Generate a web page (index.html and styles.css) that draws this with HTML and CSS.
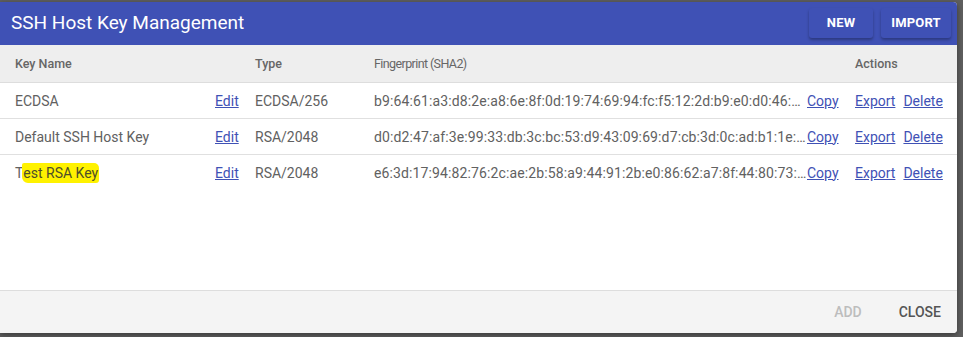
FILE: index.html
```html
<!DOCTYPE html>
<html>
<head>
<meta charset="utf-8">
<link rel="stylesheet" href="styles.css">
</head>
<body>
<div class="dialog">
  <div class="dlg-header">
    <div class="dlg-title">SSH Host Key Management</div>
    <div class="hdr-actions">
      <button class="hdr-btn btn-new">NEW</button>
      <button class="hdr-btn btn-import">IMPORT</button>
    </div>
  </div>
  <div class="dlg-body">
    <div class="row head">
      <div class="c-name">Key Name</div>
      <div class="c-edit"></div>
      <div class="c-type">Type</div>
      <div class="c-fp">Fingerprint (SHA2)</div>
      <div class="c-copy"></div>
      <div class="c-act">Actions</div>
    </div>
    <div class="row">
      <div class="c-name">ECDSA</div>
      <div class="c-edit"><a class="lnk">Edit</a></div>
      <div class="c-type">ECDSA/256</div>
      <div class="c-fp">b9:64:61:a3:d8:2e:a8:6e:8f:0d:19:74:69:94:fc:f5:12:2d:b9:e0:d0:46:7a:1c:55:90:3b:aa:41:0e:2f:88</div>
      <div class="c-copy"><a class="lnk">Copy</a></div>
      <div class="c-act"><a class="lnk">Export</a><a class="lnk">Delete</a></div>
    </div>
    <div class="row">
      <div class="c-name">Default SSH Host Key</div>
      <div class="c-edit"><a class="lnk">Edit</a></div>
      <div class="c-type">RSA/2048</div>
      <div class="c-fp">d0:d2:47:af:3e:99:33:db:3c:bc:53:d9:43:09:69:d7:cb:3d:0c:ad:b1:1e:4f:62:90:ab:12:cd:77:e1:03:5a</div>
      <div class="c-copy"><a class="lnk">Copy</a></div>
      <div class="c-act"><a class="lnk">Export</a><a class="lnk">Delete</a></div>
    </div>
    <div class="row last">
      <div class="c-name">T<span class="hl">est RSA Key</span></div>
      <div class="c-edit"><a class="lnk">Edit</a></div>
      <div class="c-type">RSA/2048</div>
      <div class="c-fp">e6:3d:17:94:82:76:2c:ae:2b:58:a9:44:91:2b:e0:86:62:a7:8f:44:80:73:5d:19:c2:0a:6e:38:bb:f1:04:9c</div>
      <div class="c-copy"><a class="lnk">Copy</a></div>
      <div class="c-act"><a class="lnk">Export</a><a class="lnk">Delete</a></div>
    </div>
  </div>
  <div class="dlg-footer">
    <button class="ftr-btn disabled">ADD</button>
    <button class="ftr-btn">CLOSE</button>
  </div>
</div>
</body>
</html>
```
FILE: styles.css
```css
html, body {
  margin: 0;
  padding: 0;
}
body {
  width: 963px;
  height: 337px;
  background: #5f5f5f;
  font-family: Roboto, "Liberation Sans", sans-serif;
  overflow: hidden;
  padding-top: 2px;
  box-sizing: border-box;
}
.dialog {
  width: 957px;
  height: 331px;
  background: #ffffff;
  border-radius: 0 4px 4px 0;
  display: flex;
  flex-direction: column;
  overflow: hidden;
  box-shadow: 0 2px 6px rgba(0,0,0,0.4);
}
.dlg-header {
  height: 43px;
  background: #3f51b5;
  display: flex;
  align-items: center;
  justify-content: space-between;
  padding: 0 6px 0 11px;
  flex-shrink: 0;
}
.dlg-title {
  color: #ffffff;
  font-size: 19px;
  font-weight: 400;
  padding-bottom: 2px;
}
.hdr-actions {
  display: flex;
  gap: 8px;
  padding-bottom: 2px;
}
.hdr-btn {
  font-family: Roboto, "Liberation Sans", sans-serif;
  background: #3f51b5;
  color: #ffffff;
  border: none;
  border-radius: 3px;
  height: 30px;
  padding: 0;
  font-size: 13px;
  font-weight: 700;
  letter-spacing: 0.2px;
  box-shadow: 0 2px 3px rgba(0,0,0,0.3);
}
.btn-new {
  width: 64px;
}
.btn-import {
  width: 70px;
}
.dlg-body {
  flex: 1;
}
.row {
  display: flex;
  align-items: center;
  height: 35px;
  border-bottom: 1px solid #e0e0e0;
  font-size: 14px;
  color: #616161;
  white-space: nowrap;
}
.row.head {
  height: 37px;
  background: #eeeeee;
  font-size: 12.5px;
  font-weight: 500;
  color: #666666;
  border-bottom: 1px solid #dddddd;
}
.row.last {
  border-bottom: none;
}
.c-name {
  width: 200px;
  padding-left: 15px;
  box-sizing: border-box;
}
.c-edit {
  width: 55px;
  padding-left: 15px;
  box-sizing: border-box;
}
.c-type {
  width: 119px;
}
.c-fp {
  width: 433px;
  overflow: hidden;
  text-overflow: ellipsis;
  letter-spacing: 0.12px;
}
.row.head .c-fp {
  font-size: 12.5px;
  font-weight: 400;
  letter-spacing: -0.6px;
}
.c-copy {
  width: 48px;
}
.c-act {
  display: flex;
  gap: 8px;
}
.lnk {
  color: #3f51b5;
  text-decoration: underline;
  cursor: pointer;
}
.hl {
  background: #fff200;
  color: #4e4e2a;
  padding: 2px 1px 2px 1px;
  margin-left: -1px;
  border-radius: 2px 5px 3px 6px;
}
.dlg-footer {
  height: 42px;
  background: #f4f4f4;
  border-top: 1px solid #dddddd;
  display: flex;
  justify-content: flex-end;
  align-items: center;
  gap: 8px;
  padding-right: 8px;
  flex-shrink: 0;
}
.ftr-btn {
  font-family: Roboto, "Liberation Sans", sans-serif;
  background: transparent;
  border: none;
  font-size: 14px;
  font-weight: 500;
  color: #555555;
  padding: 0 8px;
  height: 32px;
}
.ftr-btn.disabled {
  color: #bdbdbd;
  margin-right: 13px;
}
```
